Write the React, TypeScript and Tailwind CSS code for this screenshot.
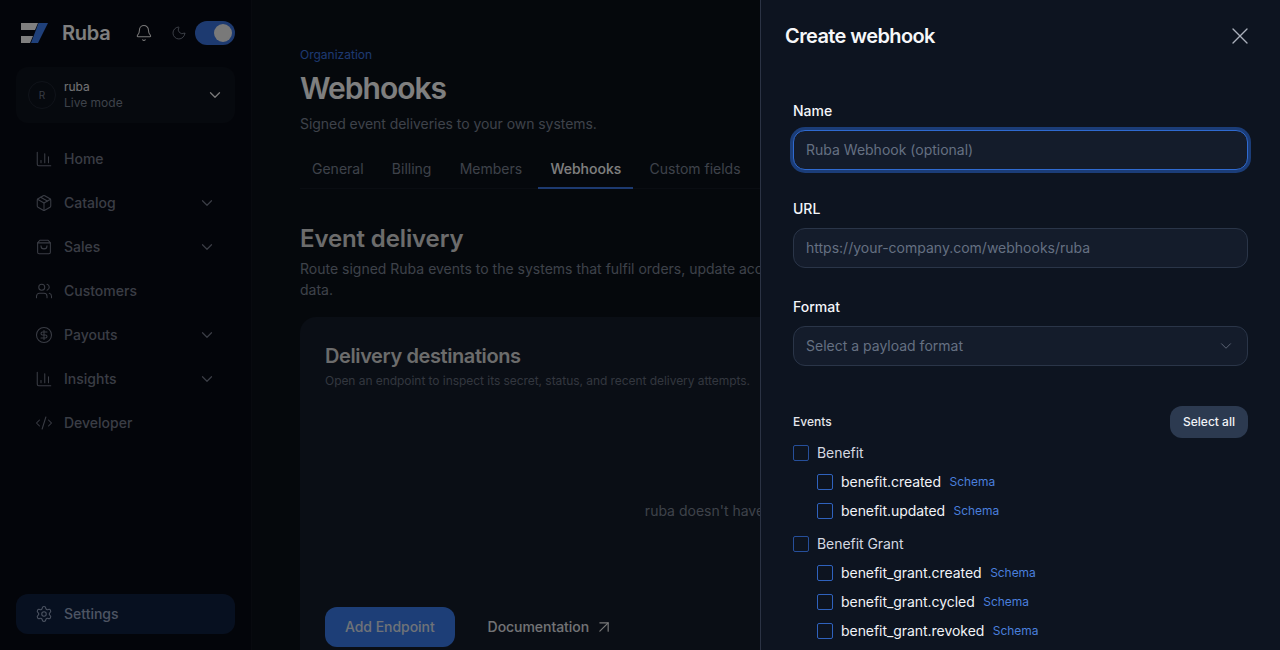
import { Bell, Moon, ChevronDown, ChartColumn, Package, Users, CircleDollarSign, CodeXml, Settings, ArrowUpRight, X } from "lucide-react";

const font = "[font-family:Inter,sans-serif]";

function BagIcon({ size = 18, strokeWidth = 1.5, className = "" }: { size?: number; strokeWidth?: number; className?: string }) {
  return (
    <svg width={size} height={size} viewBox="0 0 24 24" fill="none" stroke="currentColor" strokeWidth={strokeWidth} strokeLinecap="round" strokeLinejoin="round" className={className}>
      <path d="M6.5 3h11l3 3.5v12.5a2 2 0 0 1-2 2h-13a2 2 0 0 1-2-2V6.5z" />
      <path d="M3.7 6.5h16.6" />
      <path d="M8 10.5a4 4 0 0 0 8 0" />
    </svg>
  );
}

function NavItem({ icon: Icon, label, chevron }: { icon: any; label: string; chevron?: boolean }) {
  return (
    <div className="flex h-10 items-center rounded-xl px-[19px] text-[#747a8a]">
      <Icon size={18} strokeWidth={1.4} className="mr-[11px] shrink-0" />
      <span className="flex-1 text-sm font-medium">{label}</span>
      {chevron && <ChevronDown size={18} strokeWidth={1.6} className="text-[#747a8a]" />}
    </div>
  );
}

function Field({ label, placeholder, focused }: { label: string; placeholder: string; focused?: boolean }) {
  return (
    <div className="flex flex-col gap-2">
      <div className="h-[22px] text-sm leading-[22px] font-medium text-[#f4f6fa]">{label}</div>
      <div
        className={
          focused
            ? "flex h-10 items-center rounded-xl border border-[#2f6ad0] bg-[#141c2b] px-3 text-sm text-[#657082] shadow-[0_0_0_3px_#1b3d78]"
            : "flex h-10 items-center rounded-xl border border-[#2a3548] bg-[#141c2b] px-3 text-sm text-[#657082]"
        }
      >
        {placeholder}
      </div>
    </div>
  );
}

function Check({ label, bright, schema }: { label: string; bright?: boolean; schema?: boolean }) {
  return (
    <div className="flex h-[29px] items-center gap-[8.5px]">
      <span className={bright ? "h-4 w-4 shrink-0 rounded-[2px] border border-[#2f62bd]" : "h-4 w-4 shrink-0 rounded-[2px] border border-[#264f9a]"} />
      <span className={bright ? "-ml-[0.5px] text-sm tracking-[-0.05px] text-[#f1f3f7]" : "-ml-[0.5px] text-sm tracking-[-0.05px] text-[#d5d9e0]"}>{label}</span>
      {schema && <span className="text-xs tracking-[-0.05px] text-[#4a7fdc]">Schema</span>}
    </div>
  );
}

function Group({ title, items }: { title: string; items: string[] }) {
  return (
    <div className="flex flex-col">
      <Check label={title} />
      <div className="flex flex-col pl-6">
        {items.map((i) => (
          <Check key={i} label={i} bright schema />
        ))}
      </div>
    </div>
  );
}

export default function App() {
  return (
    <div className={`relative flex h-[650px] w-[1280px] overflow-hidden bg-[#0b1119] ${font}`}>
      <aside className="flex h-full w-[252px] shrink-0 flex-col border-r border-[#10151f] bg-[#070a14] px-4">
        <div className="mb-px flex h-[66px] items-center pl-1">
          <svg width="28" height="22" viewBox="0 0 28 22" className="shrink-0">
            <polygon points="1,1 18,1 15,8 1,8" fill="#ffffff" />
            <polygon points="1,14 13,14 10,21 1,21" fill="#ffffff" />
            <polygon points="18.5,1 28,1 18,21 11,21" fill="#3f80f5" />
          </svg>
          <span className="ml-3.5 text-xl font-semibold tracking-[-0.0125em] text-white">Ruba</span>
          <Bell size={18} strokeWidth={1.4} className="ml-[25px] text-[#f2f2f2]" />
          <Moon size={16} strokeWidth={1.25} className="ml-[18px] text-[#8b93a3]" />
          <div className="ml-2 flex h-6 w-10 items-center justify-end rounded-full bg-[#3b74e0] pr-[3px]">
            <span className="h-[18px] w-[18px] rounded-full bg-[#f2f2f2]" />
          </div>
        </div>
        <div className="flex h-14 items-center rounded-xl bg-[#0d121c] pr-[11px] pl-3">
          <div className="flex h-7 w-7 items-center justify-center rounded-full border border-[#1f2633] text-[10px] text-[#6f7888]">R</div>
          <div className="ml-2 flex flex-1 flex-col">
            <span className="text-xs leading-4 text-[#e4e6ea]">ruba</span>
            <span className="text-xs leading-4 text-[#7b8494]">Live mode</span>
          </div>
          <ChevronDown size={18} strokeWidth={1.75} className="text-[#f2f2f2]" />
        </div>
        <nav className="mt-4 flex flex-col gap-1">
          <NavItem icon={ChartColumn} label="Home" />
          <NavItem icon={Package} label="Catalog" chevron />
          <NavItem icon={BagIcon} label="Sales" chevron />
          <NavItem icon={Users} label="Customers" />
          <NavItem icon={CircleDollarSign} label="Payouts" chevron />
          <NavItem icon={ChartColumn} label="Insights" chevron />
          <NavItem icon={CodeXml} label="Developer" />
        </nav>
        <div className="mt-auto mb-4 flex h-10 items-center rounded-xl bg-[#0f2040] px-[19px] text-[#9aa9c6]">
          <Settings size={18} strokeWidth={1.4} className="mr-[11px]" />
          <span className="text-sm font-medium">Settings</span>
        </div>
      </aside>

      <main className="flex min-w-0 flex-1 flex-col pt-[47px] pr-[50px] pl-[48px]">
        <div className="h-4 text-xs leading-4 text-[#3b74e0]">Organization</div>
        <h1 className="mt-[7px] h-9 text-3xl leading-9 font-semibold tracking-[-0.033em] text-white">Webhooks</h1>
        <p className="mt-[8px] text-sm leading-5 tracking-[-0.05px] text-[#7c8494]">Signed event deliveries to your own systems.</p>
        <div className="mt-[16px] flex gap-[4.25px] border-b border-[#141a24]">
          {["General", "Billing", "Members", "Webhooks", "Custom fields"].map((t) => (
            <div
              key={t}
              className={
                t === "Webhooks"
                  ? "-mb-px h-[39px] border-b-2 border-[#3b74e0] px-3 pt-[9px] text-sm font-medium text-white"
                  : "h-[38px] px-3 pt-[9px] text-sm text-[#7c8494]"
              }
            >
              {t}
            </div>
          ))}
        </div>
        <h2 className="mt-[34px] h-8 text-2xl leading-8 font-semibold tracking-[-0.005em] text-[#d8d8d8]">Event delivery</h2>
        <p className="mt-[3px] max-w-[830px] text-sm leading-[21px] text-[#7c8494]">
          Route signed Ruba events to the systems that fulfil orders, update access, and keep customers in sync with your product data.
        </p>
        <section className="mt-[17px] flex h-[380px] shrink-0 flex-col rounded-2xl bg-[#141c2a] px-[25px] pt-[25px]">
          <h3 className="h-7 text-xl leading-7 font-semibold tracking-[-0.02em] text-[#d8d8d8]">Delivery destinations</h3>
          <p className="mt-[3px] text-xs leading-4 tracking-[-0.05px] text-[#666e7e]">Open an endpoint to inspect its secret, status, and recent delivery attempts.</p>
          <div className="flex h-[218px] items-center justify-center pt-[26px] pl-[3px] text-sm text-[#7c8494]">ruba doesn't have any webhooks yet</div>
          <div className="flex items-center gap-[33px]">
            <div className="flex h-10 items-center rounded-xl bg-[#3a7cee] px-5 text-sm font-medium tracking-[-0.05px] text-[#dfe5f0]">Add Endpoint</div>
            <div className="flex items-center gap-[5px] text-sm font-medium tracking-[-0.05px] text-[#e4e6ea]">
              Documentation <ArrowUpRight size={20} strokeWidth={1.4} className="text-[#f2f2f2]" />
            </div>
          </div>
        </section>
      </main>

      <div className="absolute inset-0 bg-black/50" />

      <div className="absolute top-0 right-0 bottom-0 flex w-[520px] flex-col overflow-hidden border-l border-[#2b3344] bg-[#0d1420] pr-8 pl-6">
        <div className="flex h-[72px] shrink-0 items-center justify-between">
          <h2 className="text-xl font-semibold tracking-[-0.03em] text-[#f6f7f9]">Create webhook</h2>
          <X size={28} strokeWidth={1.15} className="-mr-[6px] text-[#aab0bb]" />
        </div>
        <div className="flex flex-col pt-[28px] pl-2">
          <div className="flex flex-col gap-[28px]">
            <Field label="Name" placeholder="Ruba Webhook (optional)" focused />
            <Field label="URL" placeholder="https://your-company.com/webhooks/ruba" />
            <div className="flex flex-col gap-2">
              <div className="h-[22px] text-sm leading-[22px] font-medium text-[#f4f6fa]">Format</div>
              <div className="flex h-10 items-center justify-between rounded-xl border border-[#2a3548] bg-[#141c2b] px-3 text-sm text-[#657082]">
                Select a payload format
                <ChevronDown size={18} strokeWidth={1.25} className="text-[#5f6878]" />
              </div>
            </div>
          </div>
          <div className="mt-10 flex h-8 items-center justify-between">
            <span className="text-xs font-medium text-[#e4e6ea]">Events</span>
            <div className="flex h-8 w-[78px] items-center justify-center rounded-xl bg-[#2c3a50] text-xs font-medium text-[#f1f3f7]">Select all</div>
          </div>
          <div className="flex flex-col gap-1">
            <Group title="Benefit" items={["benefit.created", "benefit.updated"]} />
            <Group title="Benefit Grant" items={["benefit_grant.created", "benefit_grant.cycled", "benefit_grant.revoked", "benefit_grant.updated"]} />
          </div>
        </div>
      </div>
    </div>
  );
}
